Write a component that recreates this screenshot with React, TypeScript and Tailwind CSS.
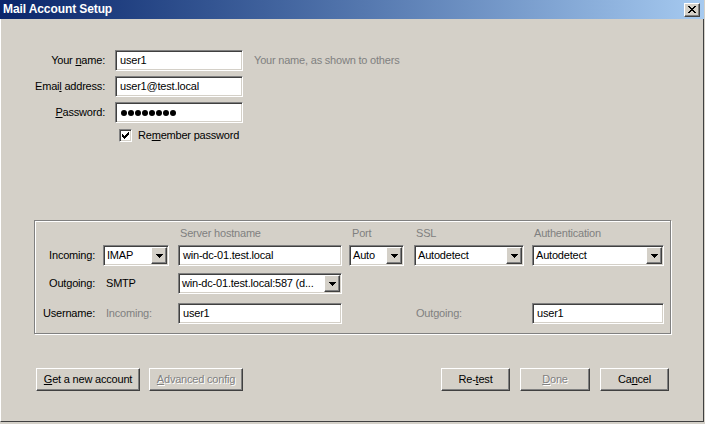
import React from 'react';

// classic 3D edges
const sunken =
  'border border-t-[#808080] border-l-[#808080] border-r-white border-b-white shadow-[inset_1px_1px_0_#404040,inset_-1px_-1px_0_#d4d0c8]';
const raised =
  'border border-t-white border-l-white border-r-[#404040] border-b-[#404040] shadow-[inset_-1px_-1px_0_#808080]';

function Arrow() {
  return (
    <svg width="7" height="4" viewBox="0 0 7 4" shapeRendering="crispEdges">
      <path d="M0 0h7v1h-1v1h-1v1h-1v1h-1v-1h-1v-1h-1v-1h-1z" fill="#000" />
    </svg>
  );
}

function TextField({ value, className = '' }: { value: React.ReactNode; className?: string }) {
  return (
    <div className={`h-[21px] bg-white ${sunken} flex items-center pl-[4px] whitespace-nowrap overflow-hidden ${className}`}>
      {value}
    </div>
  );
}

function Select({ value, className = '' }: { value: string; className?: string }) {
  return (
    <div className={`h-[21px] bg-white ${sunken} p-[1px] flex items-center ${className}`}>
      <span className="flex-1 min-w-0 overflow-hidden whitespace-nowrap pl-[2px]">{value}</span>
      <span className={`w-[16px] h-[17px] shrink-0 bg-[#d4d0c8] ${raised} flex items-center justify-center`}>
        <Arrow />
      </span>
    </div>
  );
}

function Button({
  children,
  width,
  disabled,
}: {
  children: React.ReactNode;
  width: string;
  disabled?: boolean;
}) {
  return (
    <div
      className={`${width} h-[23px] bg-[#d4d0c8] ${raised} flex items-center justify-center whitespace-nowrap ${
        disabled ? 'text-[#808080] [text-shadow:1px_1px_0_#fff]' : 'text-black'
      }`}
    >
      {children}
    </div>
  );
}

function Checkbox() {
  return (
    <div className={`w-[13px] h-[13px] bg-white ${sunken} flex items-center justify-center`}>
      <svg width="7" height="7" viewBox="0 0 7 7" shapeRendering="crispEdges">
        <path
          d="M6 0h1v1h-1z M5 1h2v1h-2z M0 2h1v1h-1z M4 2h3v1h-3z M0 3h2v1h-2z M3 3h3v1h-3z M0 4h5v1h-5z M1 5h3v1h-3z M2 6h1v1h-1z"
          fill="#000"
        />
      </svg>
    </div>
  );
}

const cols = 'grid grid-cols-[60px_83px_171px_65px_118px_132px] items-center';

export default function App() {
  return (
    <div className="w-[705px] h-[424px] bg-[#d4d0c8] overflow-hidden font-['Liberation_Sans',Arial,sans-serif] text-[11px] tracking-[-0.2px] text-black leading-[13px]">
      {/* Title bar */}
      <div className="w-[704px] h-[19px] bg-linear-to-r from-[#0a246a] to-[#a6caf0] flex items-center justify-between pl-[3px] pr-[4px]">
        <span className="text-white font-bold text-[12px] tracking-[-0.1px]">Mail Account Setup</span>
        <div className={`w-[16px] h-[14px] bg-[#d4d0c8] ${raised} flex items-center justify-center`}>
          <svg width="8" height="7" viewBox="0 0 8 7" shapeRendering="crispEdges">
            <path
              d="M0 0h2v1h-2z M6 0h2v1h-2z M1 1h2v1h-2z M5 1h2v1h-2z M2 2h4v1h-4z M3 3h2v1h-2z M2 4h4v1h-4z M1 5h2v1h-2z M5 5h2v1h-2z M0 6h2v1h-2z M6 6h2v1h-2z"
              fill="#000"
            />
          </svg>
        </div>
      </div>

      {/* Window body */}
      <div className="w-[704px] h-[403px] border-l border-l-white border-r border-r-[#404040] border-b border-b-[#404040] flex flex-col">
        {/* Identity */}
        <div className="flex flex-col gap-[5px] pt-[31px]">
          <div className="flex items-center">
            <span className="w-[104px] text-right">
              Your <u>n</u>ame:
            </span>
            <TextField value="user1" className="ml-[10px] w-[128px]" />
            <span className="ml-[11px] text-[#808080]">Your name, as shown to others</span>
          </div>
          <div className="flex items-center">
            <span className="w-[104px] text-right">
              Emai<u>l</u> address:
            </span>
            <TextField value="user1@test.local" className="ml-[10px] w-[128px]" />
          </div>
          <div className="flex items-center">
            <span className="w-[104px] text-right">
              <u>P</u>assword:
            </span>
            <TextField
              className="ml-[10px] w-[128px]"
              value={
                <span className="flex gap-[1px] pl-[1px]">
                  {Array.from({ length: 8 }).map((_, i) => (
                    <span key={i} className="w-[6px] h-[6px] rounded-full bg-black" />
                  ))}
                </span>
              }
            />
          </div>
          <div className="flex items-center pl-[118px] mt-[1px]">
            <Checkbox />
            <span className="ml-[6px]">
              Re<u>m</u>ember password
            </span>
          </div>
        </div>

        {/* Server settings */}
        <div className="ml-[33px] mt-[78px] w-[637px] border border-[#808080] shadow-[inset_1px_1px_0_#fff,1px_1px_0_#fff] flex flex-col pb-[9px]">
          <div className={`${cols} h-[14px] mt-[5px] text-[#808080]`}>
            <span />
            <span />
            <span className="pl-[2px]">Server hostname</span>
            <span className="pl-[3px]">Port</span>
            <span className="pl-[2px]">SSL</span>
            <span className="pl-[2px]">Authentication</span>
          </div>
          <div className={`${cols} h-[21px] mt-[5px]`}>
            <span className="text-right">Incoming:</span>
            <Select value="IMAP" className="ml-[8px] w-[66px]" />
            <TextField value="win-dc-01.test.local" className="w-[164px]" />
            <Select value="Auto" className="w-[55px]" />
            <Select value="Autodetect" className="w-[110px]" />
            <Select value="Autodetect" className="w-[132px]" />
          </div>
          <div className={`${cols} h-[21px] mt-[7px]`}>
            <span className="text-right">Outgoing:</span>
            <span className="pl-[11px]">SMTP</span>
            <Select value="win-dc-01.test.local:587 (d..." className="w-[164px]" />
          </div>
          <div className={`${cols} h-[21px] mt-[9px]`}>
            <span className="text-right">Username:</span>
            <span className="pl-[11px] text-[#808080]">Incoming:</span>
            <TextField value="user1" className="w-[164px]" />
            <span />
            <span className="pl-[2px] text-[#808080]">Outgoing:</span>
            <TextField value="user1" className="w-[132px]" />
          </div>
        </div>

        {/* Buttons */}
        <div className="flex items-center mt-[34px] pl-[35px] pr-[34px]">
          <Button width="w-[104px]">
            <u>G</u>et a new account
          </Button>
          <div className="ml-[9px]">
            <Button width="w-[94px]" disabled>
              <u>A</u>dvanced config
            </Button>
          </div>
          <div className="ml-auto flex gap-[10px]">
            <Button width="w-[69px]">
              Re-<u>t</u>est
            </Button>
            <Button width="w-[70px]" disabled>
              <u>D</u>one
            </Button>
            <Button width="w-[69px]">
              Ca<u>n</u>cel
            </Button>
          </div>
        </div>
      </div>
    </div>
  );
}
